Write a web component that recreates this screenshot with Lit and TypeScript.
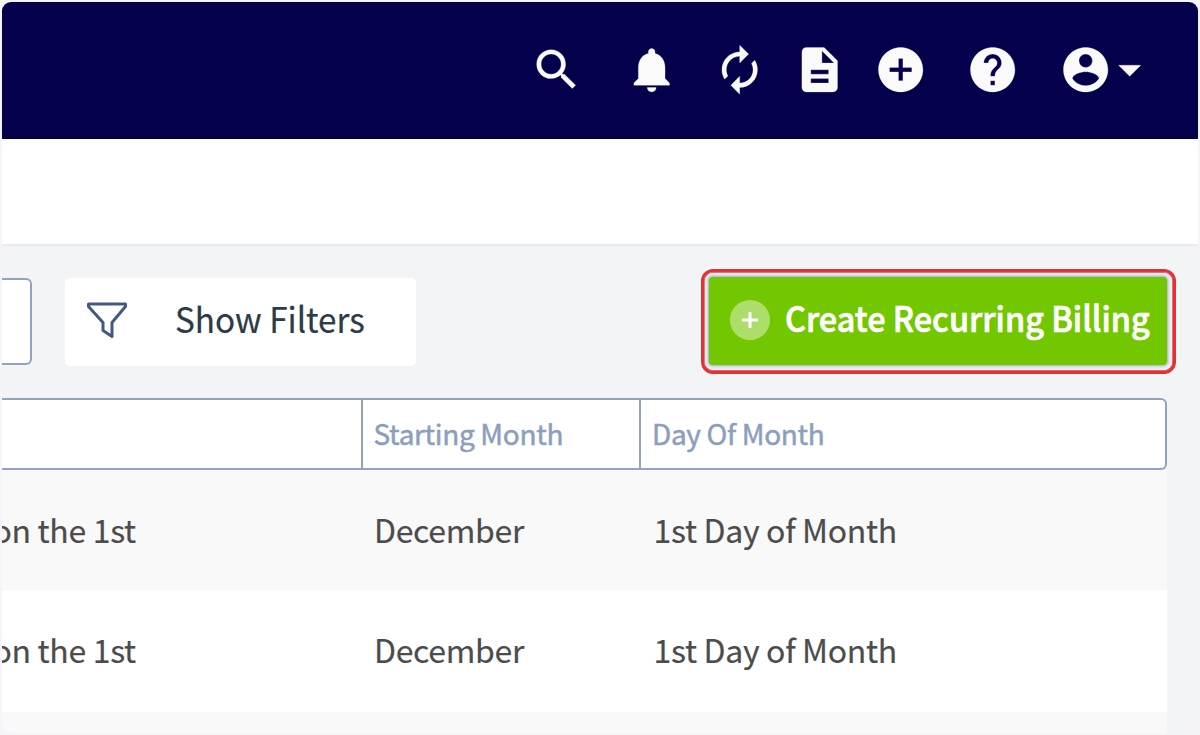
import { LitElement, html, css, svg } from "lit";
import { customElement, property } from "lit/decorators.js";

const ICONS: Record<string, string> = {
  search:
    "M15.5 14h-.79l-.28-.27C15.41 12.59 16 11.11 16 9.5 16 5.91 13.09 3 9.5 3S3 5.91 3 9.5 5.91 16 9.5 16c1.61 0 3.09-.59 4.23-1.57l.27.28v.79l5 4.99L20.49 19l-4.99-5zm-6 0C7.01 14 5 11.99 5 9.5S7.01 5 9.5 5 14 7.01 14 9.5 11.99 14 9.5 14z",
  bell: "M12 22c1.1 0 2-.9 2-2h-4c0 1.1.89 2 2 2zm6-6v-5c0-3.07-1.64-5.64-4.5-6.32V4c0-.83-.67-1.5-1.5-1.5s-1.5.67-1.5 1.5v.68C7.63 5.36 6 7.92 6 11v5l-2 2v1h16v-1l-2-2z",
  sync: "M12 6v3l4-4-4-4v3c-4.42 0-8 3.58-8 8 0 1.57.46 3.03 1.24 4.26L6.7 14.8c-.45-.83-.7-1.79-.7-2.8 0-3.31 2.69-6 6-6zm6.76 1.74L17.3 9.2c.44.84.7 1.79.7 2.8 0 3.31-2.69 6-6 6v-3l-4 4 4 4v-3c4.42 0 8-3.58 8-8 0-1.57-.46-3.03-1.24-4.26z",
  doc: "M14 2H6c-1.1 0-1.99.9-1.99 2L4 20c0 1.1.89 2 1.99 2H18c1.1 0 2-.9 2-2V8l-6-6zm2 16H8v-2h8v2zm0-4H8v-2h8v2zm-3-5V3.5L18.5 9H13z",
  add: "M12 2C6.48 2 2 6.48 2 12s4.48 10 10 10 10-4.48 10-10S17.52 2 12 2zm5 11h-4v4h-2v-4H7v-2h4V7h2v4h4v2z",
  help: "M12 2C6.48 2 2 6.48 2 12s4.48 10 10 10 10-4.48 10-10S17.52 2 12 2zm1 17h-2v-2h2v2zm2.07-7.75l-.9.92C13.45 12.9 13 13.5 13 15h-2v-.5c0-1.1.45-2.1 1.17-2.83l1.24-1.26c.37-.36.59-.86.59-1.41 0-1.1-.9-2-2-2s-2 .9-2 2H8c0-2.21 1.79-4 4-4s4 1.79 4 4c0 .88-.36 1.68-.93 2.25z",
  account:
    "M12 2C6.48 2 2 6.48 2 12s4.48 10 10 10 10-4.48 10-10S17.52 2 12 2zm0 3c1.66 0 3 1.34 3 3s-1.34 3-3 3-3-1.34-3-3 1.34-3 3-3zm0 14.2c-2.5 0-4.71-1.28-6-3.22.03-1.99 4-3.08 6-3.08 1.99 0 5.97 1.09 6 3.08-1.29 1.94-3.5 3.22-6 3.22z",
  caret: "M7 10l5 5 5-5z",
};

@customElement("nav-icon")
class NavIcon extends LitElement {
  @property() name = "search";
  static styles = css`
    :host {
      display: block;
      width: 53.4px;
      height: 53.4px;
    }
    svg {
      display: block;
      width: 100%;
      height: 100%;
      fill: #fafafa;
      stroke: #fafafa;
      stroke-width: 0.12;
    }
  `;
  render() {
    return html`<svg viewBox="0 0 24 24">${svg`<path d=${ICONS[this.name]}></path>`}</svg>`;
  }
}

@customElement("app-root")
class AppRoot extends LitElement {
  static styles = css`
    :host {
      display: block;
      box-sizing: border-box;
      width: 1200px;
      height: 735px;
      padding: 2px;
      background: #f4f4f9;
      font-family: "Noto Sans CJK SC", "Noto Sans", sans-serif;
    }
    * {
      box-sizing: border-box;
    }
    .frame {
      width: 1196px;
      height: 731px;
      border-radius: 9px;
      overflow: hidden;
      background: #f2f4f6;
      display: flex;
      flex-direction: column;
    }
    .nav {
      flex: none;
      height: 137px;
      background: #04004b;
      border-bottom: 1px solid #02002f;
      display: grid;
      grid-template-columns: 95px 88px 79.8px 81.3px 92px 92.3px 44.5px 53.4px;
      padding: 41px 0 0 528.2px;
    }
    .sub {
      flex: none;
      height: 107px;
      background: #fff;
      border-bottom: 2px solid #e9ebee;
    }
    .tools {
      flex: none;
      display: flex;
      align-items: center;
      height: 105px;
      margin-top: 23px;
      padding-right: 22px;
    }
    .field {
      width: 30px;
      height: 87px;
      border: 2px solid #93a2be;
      border-left: 0;
      border-radius: 0 6px 6px 0;
      background: #fff;
    }
    .filters {
      width: 351px;
      height: 88px;
      margin-left: 33px;
      border-radius: 5px;
      background: #fff;
      display: flex;
      align-items: center;
      padding: 0 0 4px 21px;
      font-size: 35px;
      line-height: 50px;
      color: #2d3b47;
      white-space: nowrap;
    }
    .funnel {
      width: 42px;
      height: 38px;
      margin-right: 47px;
      fill: none;
      stroke: #435a80;
      stroke-width: 3;
      stroke-linejoin: round;
    }
    .label {
      display: block;
      transform-origin: 0 50%;
      -webkit-text-stroke: 0.2px currentColor;
    }
    .filters .label {
      transform: scaleX(0.95);
      margin-top: -4px;
    }
    .ring {
      width: 475px;
      height: 105px;
      margin-left: auto;
      border: 3px solid #e03134;
      box-shadow: inset 0 0 0 0.7px #e03134;
      border-radius: 12px;
      padding: 5px;
    }
    .create {
      width: 458px;
      height: 88px;
      border-radius: 4px;
      background: #72c700;
      box-shadow: 0 0 2px 1px #a9b4c6, 0 0 3px 3px #dde2ee;
      display: flex;
      align-items: center;
      padding: 0 0 2px 21px;
      color: #fff;
      font-size: 35px;
      font-weight: 500;
      line-height: 50px;
      white-space: nowrap;
    }
    .create .label {
      width: 380px;
      transform: scaleX(0.927);
      margin-top: -6px;
      -webkit-text-stroke-width: 0.7px;
    }
    .plus {
      width: 40px;
      height: 40px;
      margin-right: 15px;
      flex: none;
    }
    .grid {
      width: 1165px;
      margin-top: 24px;
      flex: none;
    }
    .head,
    .row {
      display: grid;
      grid-template-columns: 359px 278px 1fr;
      white-space: nowrap;
      -webkit-text-stroke: 0.15px currentColor;
    }
    .head {
      height: 72px;
      border: 2px solid #93a2be;
      border-left: 0;
      border-radius: 0 6px 6px 0;
      background: #fff;
      color: #8b9fbd;
      font-size: 28px;
      line-height: 66px;
      letter-spacing: -0.33px;
      -webkit-text-stroke-width: 0.5px;
    }
    .head div + div {
      border-left: 2px solid #93a2be;
      padding-left: 10.5px;
    }
    .head div:last-child {
      padding-left: 11px;
    }
    .row {
      height: 122px;
      background: #fff;
      color: #4c4c4c;
      font-size: 32px;
      line-height: 118px;
      letter-spacing: -0.32px;
    }
    .row:nth-child(even) {
      height: 120px;
      background: #f9f9f9;
    }
    .row div + div {
      padding-left: 13px;
    }
    .row div:last-child {
      padding-left: 14.5px;
    }
    .row .desc {
      margin-left: -9.5px;
    }
  `;

  private icons = ["search", "bell", "sync", "doc", "add", "help", "account", "caret"];
  private rows = [
    ["on the 1st", "December", "1st Day of Month"],
    ["on the 1st", "December", "1st Day of Month"],
    ["", "", ""],
  ];

  render() {
    return html`
      <div class="frame">
        <div class="nav">${this.icons.map((n) => html`<nav-icon name=${n}></nav-icon>`)}</div>
        <div class="sub"></div>
        <div class="tools">
          <div class="field"></div>
          <div class="filters">
            <svg class="funnel" viewBox="0 0 42 38">
              <path d="M2.5 3H39.5V5.5L26 21.5V35.5L17 29.5V21.5L2.5 5.5Z"></path>
            </svg>
            <span class="label">Show Filters</span>
          </div>
          <div class="ring">
            <div class="create">
              <svg class="plus" viewBox="0 0 40 40">
                <circle cx="20" cy="20" r="20" fill="#fff" fill-opacity=".42"></circle>
                <path d="M20 12V28M12 20H28" stroke="#fff" stroke-width="3"></path>
              </svg>
              <span class="label">Create Recurring Billing</span>
            </div>
          </div>
        </div>
        <div class="grid">
          <div class="head">
            <div></div>
            <div>Starting Month</div>
            <div>Day Of Month</div>
          </div>
          ${this.rows.map(
            (r) => html`<div class="row">
              <div class="desc">${r[0]}</div>
              <div>${r[1]}</div>
              <div>${r[2]}</div>
            </div>`
          )}
        </div>
      </div>
    `;
  }
}
